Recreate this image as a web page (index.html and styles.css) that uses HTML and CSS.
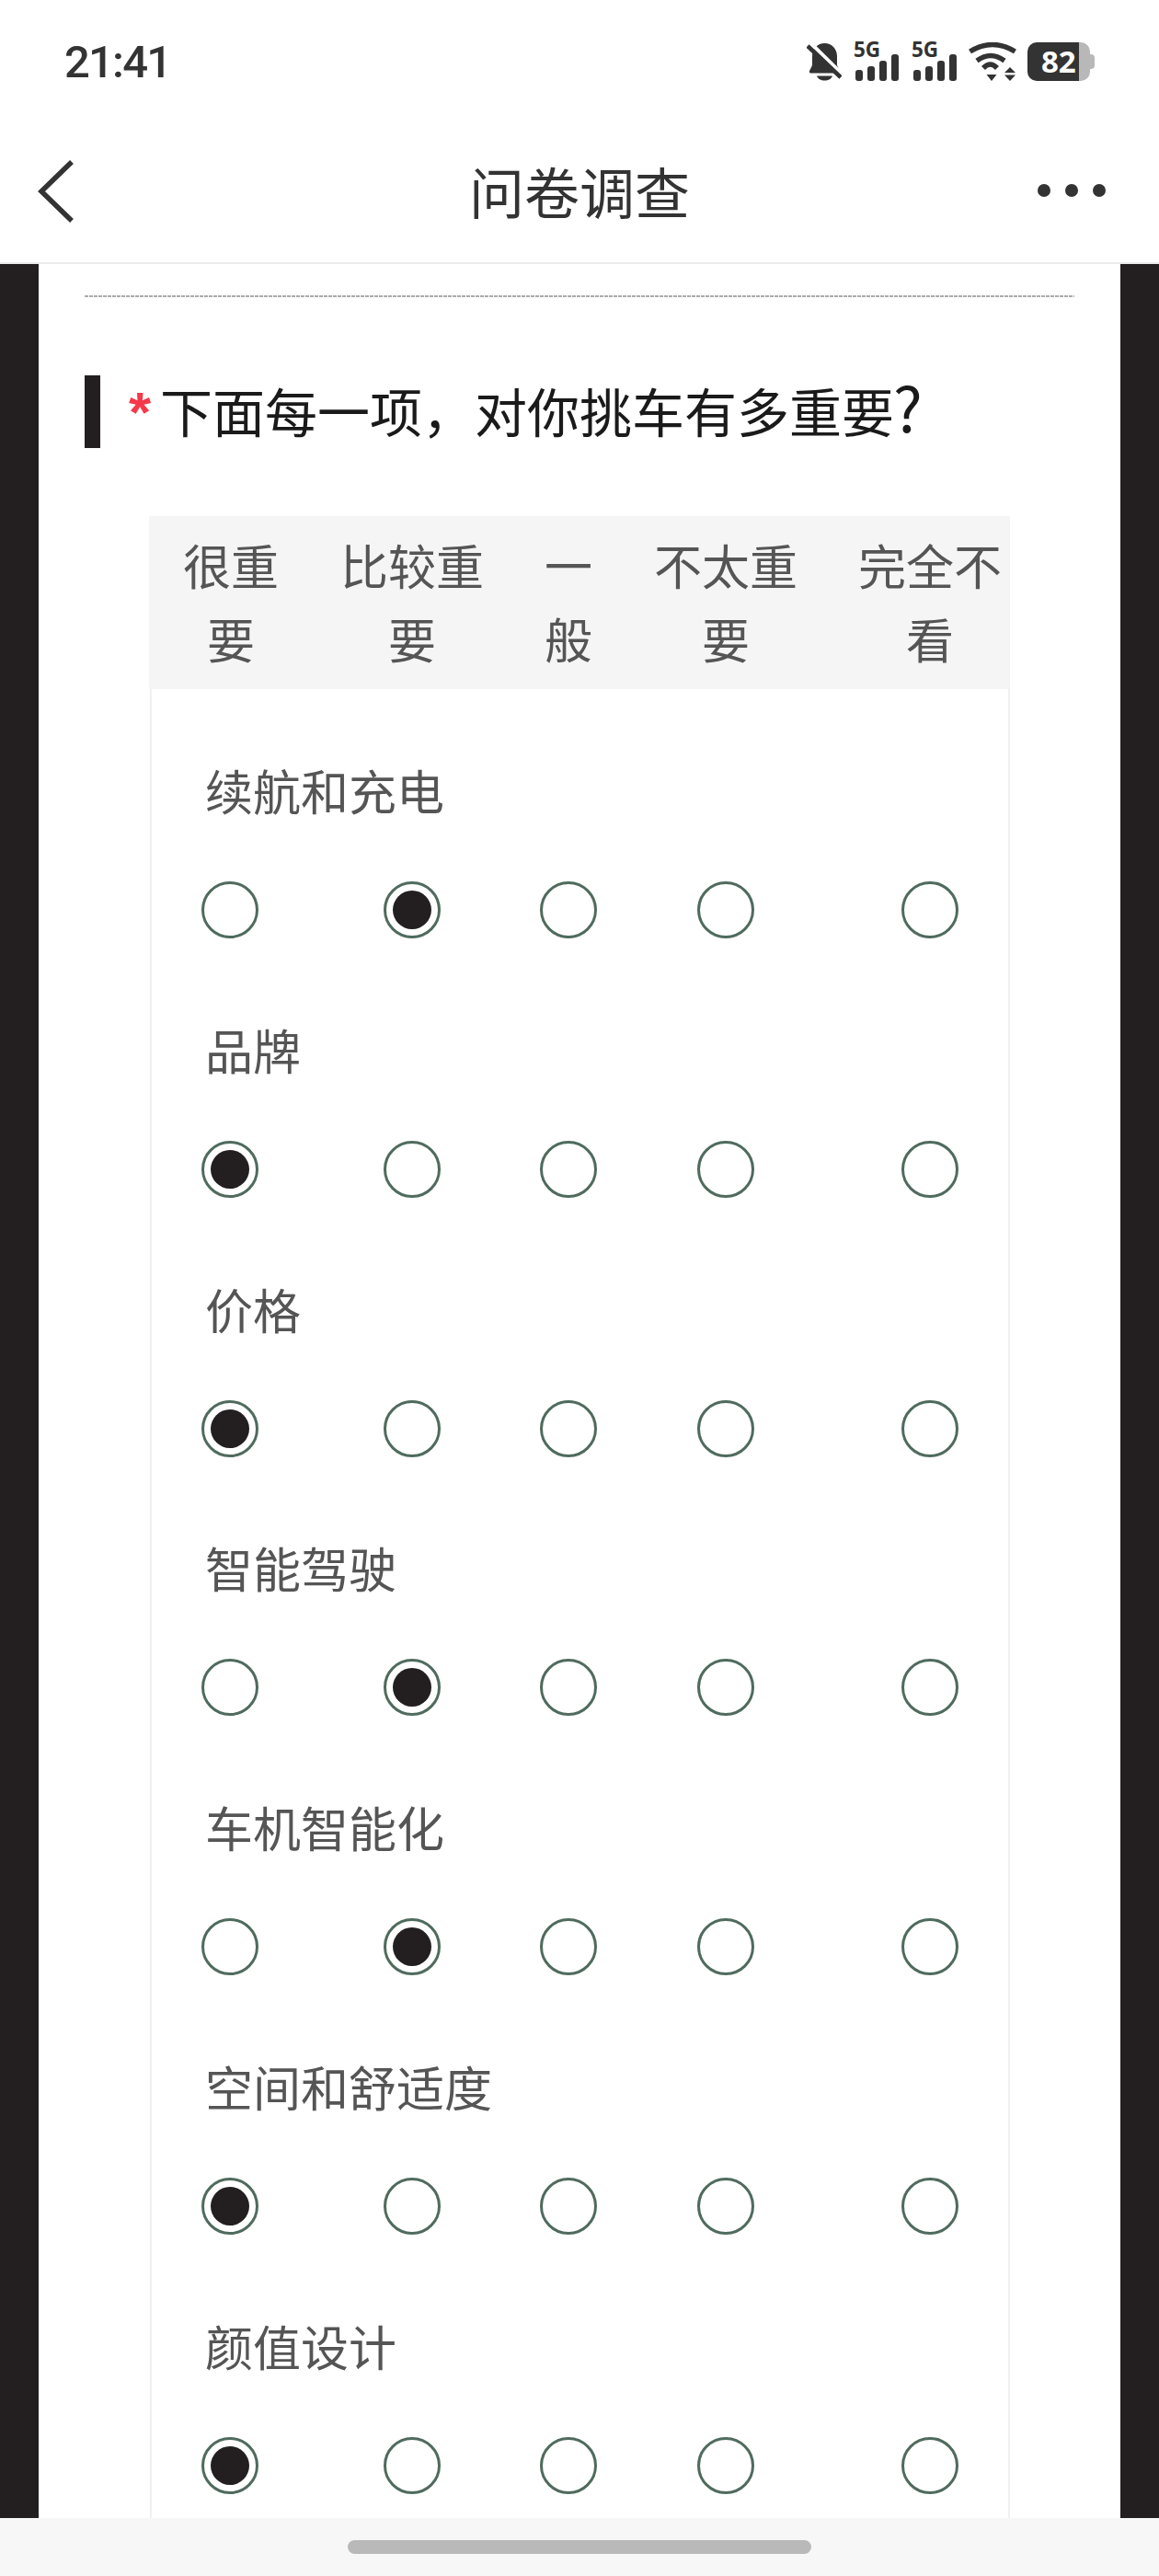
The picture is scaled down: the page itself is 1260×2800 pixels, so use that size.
FILE: index.html
```html
<!DOCTYPE html>
<html lang="zh-CN">
<head>
    <meta charset="UTF-8">
    <meta name="viewport" content="width=device-width, initial-scale=1.0">
    <title>问卷调查</title>
    <link rel="stylesheet" href="styles.css">
</head>
<body>
    <div class="phone">
        <div class="status-bar">
            <span class="time">21:41</span>
            <div class="status-icons">
                <svg class="icon-bell" width="38" height="42" viewBox="0 0 38 42">
                    <path d="M19.500 1C12 1 6 7 6 15v10l-3 6c-.5 1.500 0 2.500 1.500 2.500h30c1.500 0 2-1 1.500-2.500l-3-6V15C33 7 27 1 19.500 1z" fill="#333"/>
                    <path d="M11 36.500h17c-1 3-4.500 5-8.500 5s-7.500-2-8.500-5z" fill="#333"/>
                    <path d="M4.500 1L41 37" stroke="#fff" stroke-width="4"/>
                    <path d="M1 4l36 34" stroke="#333" stroke-width="4.500"/>
                </svg>
                <div class="signal">
                    <span class="signal-label">5G</span>
                    <div class="bars">
                        <i class="bar bar-1"></i><i class="bar bar-2"></i><i class="bar bar-3"></i><i class="bar bar-4"></i>
                    </div>
                </div>
                <div class="signal">
                    <span class="signal-label">5G</span>
                    <div class="bars">
                        <i class="bar bar-1"></i><i class="bar bar-2"></i><i class="bar bar-3"></i><i class="bar bar-4"></i>
                    </div>
                </div>
                <svg class="icon-wifi" width="52" height="42" viewBox="0 0 52 42">
                    <path d="M1.500 10Q26-5 50.500 10" fill="none" stroke="#333" stroke-width="5.500"/>
                    <path d="M9 20Q24 9 39 20" fill="none" stroke="#333" stroke-width="5.500"/>
                    <path d="M16 28Q23.500 20 31 28" fill="none" stroke="#333" stroke-width="5.500"/>
                    <path d="M19.500 35h11L25 42z" fill="#333"/>
                    <path d="M39 33l6-6 6 6zM39 35.500h12L45 42z" fill="#333"/>
                </svg>
                <div class="battery">
                    <div class="battery-level">82</div>
                    <div class="battery-rest"></div>
                    <div class="battery-tip"></div>
                </div>
            </div>
        </div>

        <div class="nav-bar">
            <svg class="nav-back" width="40" height="68" viewBox="0 0 40 68">
                <path d="M37 2L4 34l33 32" fill="none" stroke="#333" stroke-width="5.500"/>
            </svg>
            <h1 class="nav-title">问卷调查</h1>
            <div class="nav-more"><i></i><i></i><i></i></div>
        </div>

        <div class="content">
            <div class="card">
                <div class="dashed-line"></div>

                <div class="question">
                    <span class="question-mark"></span>
                    <span class="required">*</span>
                    <h2 class="question-text">下面每一项，对你挑车有多重要<span class="question-end">?</span></h2>
                </div>

                <div class="matrix">
                    <div class="matrix-head">
                        <div class="col">很重要</div>
                        <div class="col">比较重要</div>
                        <div class="col">一般</div>
                        <div class="col">不太重要</div>
                        <div class="col">完全不看</div>
                    </div>
                    <div class="matrix-body" id="matrix-body"></div>
                </div>
            </div>
        </div>

        <div class="home-bar"><span class="home-pill"></span></div>
    </div>

    <script>
        const rows = [
            { name: '续航和充电', checked: 1 },
            { name: '品牌', checked: 0 },
            { name: '价格', checked: 0 },
            { name: '智能驾驶', checked: 1 },
            { name: '车机智能化', checked: 1 },
            { name: '空间和舒适度', checked: 0 },
            { name: '颜值设计', checked: 0 }
        ];

        const body = document.getElementById('matrix-body');

        rows.forEach(row => {
            let radios = '';
            for (let i = 0; i < 5; i++) {
                radios += `<div class="col"><span class="radio ${i === row.checked ? 'checked' : ''}"></span></div>`;
            }
            const rowDiv = document.createElement('div');
            rowDiv.className = 'matrix-row';
            rowDiv.innerHTML = `
                <div class="row-name">${row.name}</div>
                <div class="row-radios">${radios}</div>
            `;
            body.appendChild(rowDiv);
        });
    </script>
</body>
</html>
```

FILE: styles.css
```css
* {
    box-sizing: border-box;
}

body {
    margin: 0;
    background-color: #fff;
    font-family: "Noto Sans CJK SC", "Noto Sans", sans-serif;
}

.phone {
    display: flex;
    flex-direction: column;
    width: 1260px;
    height: 2800px;
    overflow: hidden;
}

.status-bar {
    display: flex;
    justify-content: space-between;
    align-items: center;
    height: 134px;
    padding: 0 70px;
}

.time {
    font-family: Roboto, sans-serif;
    font-size: 49px;
    font-weight: 500;
    letter-spacing: -1.8px;
    color: #333;
}

.status-icons {
    display: flex;
    align-items: flex-end;
    height: 42px;
}

.icon-bell {
    display: block;
    margin-right: 15px;
}

.signal {
    position: relative;
    width: 47px;
    height: 42px;
    margin-right: 16px;
}

.signal-label {
    position: absolute;
    left: -2px;
    top: -5px;
    font-family: "Open Sans", sans-serif;
    font-size: 22.5px;
    font-weight: 700;
    line-height: 26px;
    color: #333;
}

.bars {
    position: absolute;
    left: 0;
    bottom: 0;
    display: flex;
    align-items: flex-end;
    gap: 5px;
}

.bar {
    display: block;
    width: 8px;
    border-radius: 3px;
    background-color: #333;
}

.bar-1 { height: 12px; }
.bar-2 { height: 16px; }
.bar-3 { height: 22px; }
.bar-4 { height: 29px; }

.icon-wifi {
    display: block;
    margin-left: -3px;
    margin-right: 12px;
}

.battery {
    display: flex;
    align-items: center;
    height: 42px;
}

.battery-level {
    width: 56px;
    height: 42px;
    padding-left: 15px;
    border-radius: 10px 0 0 10px;
    background-color: #333;
    font-family: "Open Sans", sans-serif;
    font-size: 33px;
    font-weight: 700;
    line-height: 42px;
    color: #fff;
    white-space: nowrap;
}

.battery-rest {
    width: 12px;
    height: 42px;
    border-radius: 0 10px 10px 0;
    background-color: #b8b8b8;
}

.battery-tip {
    width: 5px;
    height: 16px;
    border-radius: 0 4px 4px 0;
    background-color: #b8b8b8;
}

.nav-bar {
    position: relative;
    display: flex;
    justify-content: center;
    align-items: center;
    height: 153px;
    border-bottom: 2px solid #ececec;
}

.nav-back {
    position: absolute;
    left: 41px;
    top: 40px;
}

.nav-title {
    margin: 0 0 6px;
    font-size: 60px;
    font-weight: 400;
    line-height: 120px;
    color: #333;
}

.nav-more {
    position: absolute;
    right: 58px;
    top: 66px;
    display: flex;
    gap: 16px;
}

.nav-more i {
    display: block;
    width: 14px;
    height: 14px;
    border-radius: 50%;
    background-color: #333;
}

.content {
    flex: 1;
    min-height: 0;
    overflow: hidden;
    padding: 0 42px;
    background-color: #231f20;
}

.card {
    min-height: 100%;
    padding: 34px 50px 0;
    background-color: #fff;
}

.dashed-line {
    height: 2px;
    background-image: linear-gradient(to right, #aaa 4px, transparent 4px);
    background-size: 5px 2px;
}

.question {
    display: flex;
    align-items: center;
    height: 79px;
    margin-top: 85px;
}

.question-mark {
    width: 17px;
    height: 79px;
    background-color: #231f20;
}

.required {
    width: 33px;
    margin-left: 31px;
    font-family: "Liberation Sans", sans-serif;
    font-size: 62px;
    font-weight: 700;
    line-height: 79px;
    color: #f5394a;
}

.question-text {
    margin: 0 0 4px 1px;
    font-size: 57px;
    font-weight: 400;
    line-height: 79px;
    white-space: nowrap;
    color: #1a1a1a;
}

.question-end {
    margin-left: -1px;
    font-size: 67px;
    line-height: 1;
}

.matrix {
    width: 936px;
    margin: 74px 0 0 70px;
    overflow: hidden;
}

.matrix-head,
.row-radios {
    display: grid;
    width: 958px;
}

.matrix-head {
    grid-template-columns: 174px 220px 120px 222px 222px;
    height: 188px;
    padding: 13px 0 0 2px;
    width: 960px;
    background-color: #f5f5f5;
    font-size: 52px;
    line-height: 80px;
    text-align: center;
    color: #555;
}

.matrix-head .col {
    padding: 0 30px;
}

.matrix-body {
    margin-left: 1px;
    padding-top: 70px;
    border: solid #f0f0f0;
    border-width: 0 2px;
}

.matrix-row {
    height: 281.75px;
}

.row-name {
    padding-left: 58px;
    font-size: 52px;
    line-height: 80px;
    color: #555;
}

.row-radios {
    grid-template-columns: 174px 221px 120px 222px 222px;
    margin-top: 59px;
    margin-left: -2px;
}

.row-radios .col {
    display: flex;
    justify-content: center;
}

.radio {
    display: flex;
    justify-content: center;
    align-items: center;
    width: 62px;
    height: 62px;
    border: 3.5px solid #4f6b5e;
    border-radius: 50%;
}

.radio.checked::after {
    content: "";
    width: 42px;
    height: 42px;
    border-radius: 50%;
    background-color: #231f20;
}

.home-bar {
    display: flex;
    justify-content: center;
    align-items: flex-start;
    height: 63px;
    padding-top: 24px;
    background-color: #f7f7f7;
}

.home-pill {
    width: 504px;
    height: 15px;
    border-radius: 8px;
    background-color: #b9b9b9;
}
```
